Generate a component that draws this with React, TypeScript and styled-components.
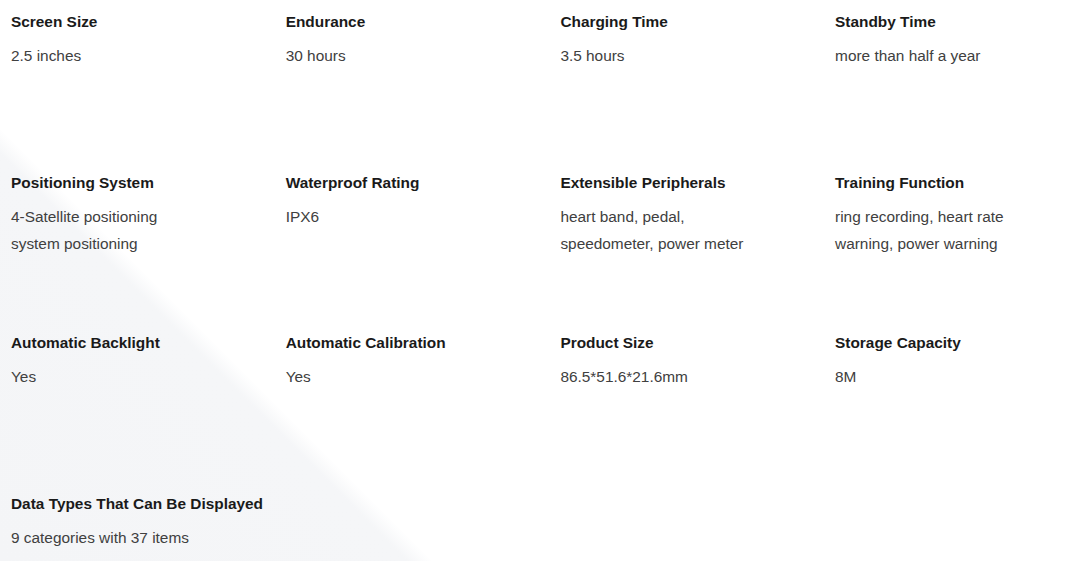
import React from "react";
import styled, { createGlobalStyle } from "styled-components";

const GlobalStyle = createGlobalStyle`
	html, body {
		margin: 0;
		padding: 0;
		background: #fff;
	}
	body {
		font-family: "Liberation Sans", Arial, sans-serif;
	}
`;

const specs = [
	{ title: "Screen Size", value: ["2.5 inches"] },
	{ title: "Endurance", value: ["30 hours"] },
	{ title: "Charging Time", value: ["3.5 hours"] },
	{ title: "Standby Time", value: ["more than half a year"] },
	{ title: "Positioning System", value: ["4-Satellite positioning", "system positioning"] },
	{ title: "Waterproof Rating", value: ["IPX6"] },
	{ title: "Extensible Peripherals", value: ["heart band, pedal,", "speedometer, power meter"] },
	{ title: "Training Function", value: ["ring recording, heart rate", "warning, power warning"] },
	{ title: "Automatic Backlight", value: ["Yes"] },
	{ title: "Automatic Calibration", value: ["Yes"] },
	{ title: "Product Size", value: ["86.5*51.6*21.6mm"] },
	{ title: "Storage Capacity", value: ["8M"] },
	{ title: "Data Types That Can Be Displayed", value: ["9 categories with 37 items"] },
];

const App = () => {
	return (
		<>
			<GlobalStyle />
			<Page>
				<SpecGrid>
					{specs.map((spec) => (
						<SpecItem key={spec.title}>
							<SpecTitle>{spec.title}</SpecTitle>
							<SpecValue>
								{spec.value.map((line) => (
									<div key={line}>{line}</div>
								))}
							</SpecValue>
						</SpecItem>
					))}
				</SpecGrid>
			</Page>
		</>
	);
};

export default App;

const Page = styled.div`
	width: 1080px;
	height: 561px;
	overflow: hidden;
	background: linear-gradient(
		45deg,
		#f4f5f7 0px,
		#f5f6f8 288px,
		#ffffff 306px,
		#ffffff 100%
	);
`;

const SpecGrid = styled.div`
	display: grid;
	grid-template-columns: repeat(4, 274.7px);
	grid-auto-rows: 160.7px;
	padding: 8px 0 0 11px;
`;

const SpecItem = styled.div`
	display: flex;
	flex-direction: column;
`;

const SpecTitle = styled.div`
	font-size: 15.4px;
	font-weight: 700;
	line-height: 27px;
	color: #1a1a1a;
	margin-bottom: 7px;
`;

const SpecValue = styled.div`
	font-size: 15.4px;
	line-height: 27px;
	color: #404040;
`;
